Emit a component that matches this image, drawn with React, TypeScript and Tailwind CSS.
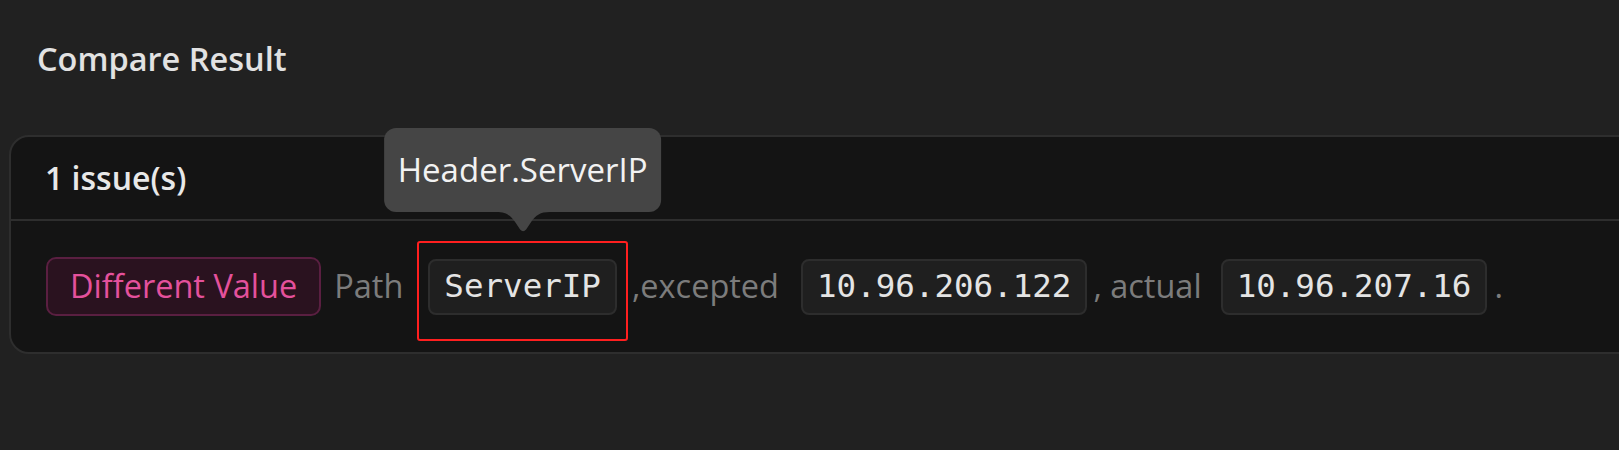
import React from "react";

const sans = { fontFamily: '"Open Sans", "Noto Sans", sans-serif' };
const mono = { fontFamily: '"DejaVu Sans Mono", "Liberation Mono", monospace' };

function Chip({ children }: { children: React.ReactNode }) {
  return (
    <span
      className="inline-flex h-[56px] items-center rounded-[8px] border-2 border-[#2d2d2d] bg-[#1f1f1f] px-[14px] text-[32.5px] text-[#e4e4e4]"
      style={mono}
    >
      {children}
    </span>
  );
}

export default function App() {
  return (
    <div className="h-[450px] w-full overflow-hidden bg-[#212121]" style={sans}>
      <div className="h-[135px] pl-[37px] pt-[37px]">
        <div className="text-[32.5px] font-semibold leading-[44px] text-[#e2e2e2]">Compare Result</div>
      </div>
      <div className="ml-[9px] mr-[-30px] rounded-[20px] border-2 border-[#2e2e2e] bg-[#141414]">
        <div className="flex h-[84px] items-center border-b-2 border-[#2e2e2e] pl-[34px] text-[32px] font-semibold text-[#e8e8e8]">
          1 issue(s)
        </div>
        <div className="flex h-[131px] items-center pl-[35px] text-[32.5px] text-[#7c7c7c]">
          <span className="inline-flex h-[59px] items-center rounded-[10px] border-2 border-[#5a1f41] bg-[#2a121f] px-[22px] text-[#e4519c]">
            Different Value
          </span>
          <span className="ml-[13px]">Path</span>
          <span className="relative ml-[25px] inline-flex">
            <Chip>ServerIP</Chip>
            <span className="pointer-events-none absolute -left-[11px] -right-[11px] -top-[18px] -bottom-[26px] rounded-[3px] border-2 border-[#ff1f1f]" />
            <span className="absolute bottom-[calc(100%+26px)] left-1/2 flex -translate-x-1/2 flex-col items-center">
              <span className="whitespace-nowrap rounded-[12px] bg-[#454545] px-[14px] py-[15px] text-[33px] leading-[54px] text-[#f2f2f2]">
                Header.ServerIP
              </span>
              <svg width="54" height="21" viewBox="0 0 54 21" className="block">
                <path d="M0 0 C10 0 14 3 19 10 L24 17.5 Q27 21 30 17.5 L35 10 C40 3 44 0 54 0 Z" fill="#454545" />
              </svg>
            </span>
          </span>
          <span className="ml-[15px]">,excepted</span>
          <span className="ml-[22px] inline-flex">
            <Chip>10.96.206.122</Chip>
          </span>
          <span className="ml-[6px]">, actual</span>
          <span className="ml-[19px] inline-flex">
            <Chip>10.96.207.16</Chip>
          </span>
          <span className="ml-[7px]">.</span>
        </div>
      </div>
    </div>
  );
}
